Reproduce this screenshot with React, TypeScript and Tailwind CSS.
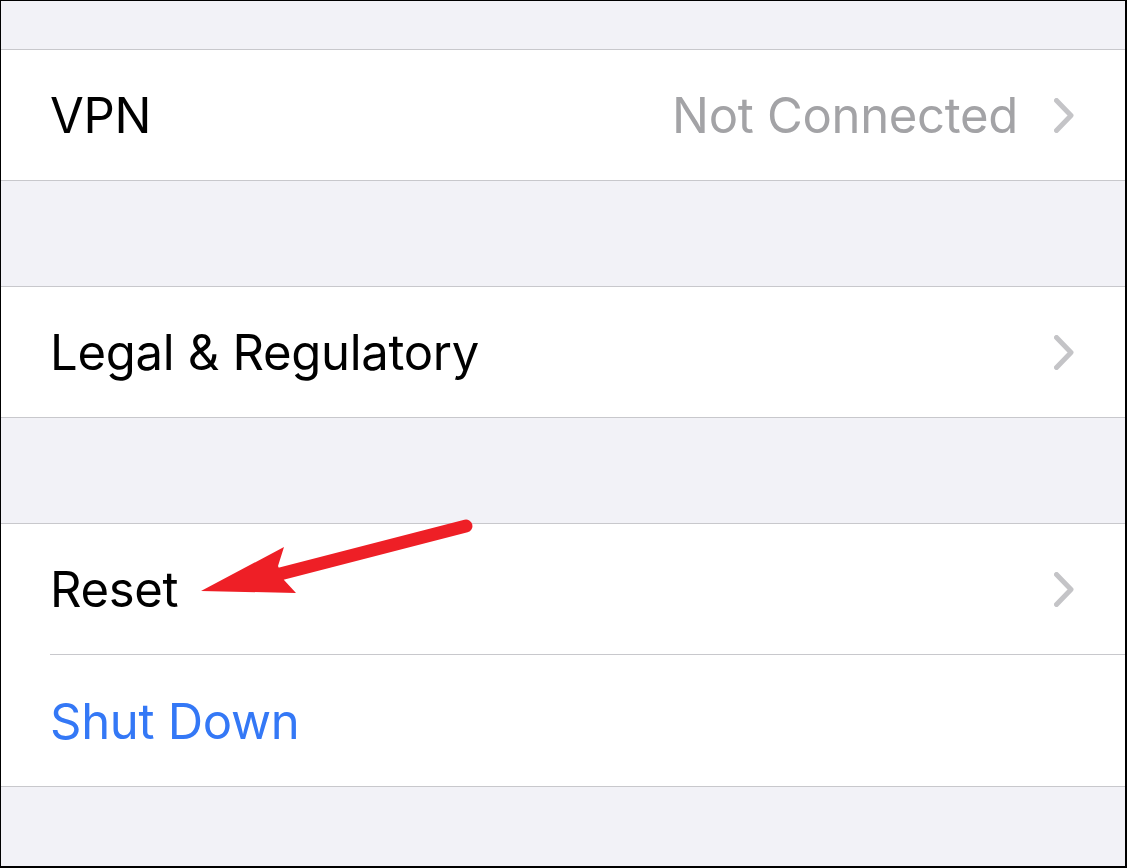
import React from "react";

function Chevron() {
  return (
    <svg width="20" height="35" viewBox="0 0 20 35" fill="none" className="shrink-0">
      <path
        d="M2.5 2.5 L17 17.5 L2.5 32.5"
        stroke="#c4c4c7"
        strokeWidth="5"
        strokeLinecap="round"
        strokeLinejoin="round"
      />
    </svg>
  );
}

function Row({
  label,
  value,
  chevron = true,
  blue = false,
}: {
  label: string;
  value?: string;
  chevron?: boolean;
  blue?: boolean;
}) {
  return (
    <div className="h-[130px] flex items-center pl-[49px] pr-[51px]">
      <span
        className={
          "flex-1 text-[49px] leading-none tracking-[-0.3px] " +
          (blue ? "text-[#3478f6]" : "text-black")
        }
      >
        {label}
      </span>
      {value && (
        <span className="text-[49px] leading-none tracking-[-0.3px] text-[#a3a3a6] mr-[36px]">
          {value}
        </span>
      )}
      {chevron && <Chevron />}
    </div>
  );
}

function Gap({ h }: { h: string }) {
  return <div className={h + " bg-[#f2f2f7]"} />;
}

function Line() {
  return <div className="h-px bg-[#c8c8cc]" />;
}

export default function App() {
  return (
    <div
      className="relative w-[1127px] h-[868px] overflow-hidden"
      style={{ fontFamily: "Inter, 'Noto Sans', sans-serif" }}
    >
      <div className="w-full h-full border-l border-t border-r-2 border-b-2 border-black bg-[#f2f2f7] flex flex-col">
        <Gap h="h-[48px]" />
        <Line />
        <div className="bg-white">
          <Row label="VPN" value="Not Connected" />
        </div>
        <Line />
        <Gap h="h-[105px]" />
        <Line />
        <div className="bg-white">
          <Row label="Legal & Regulatory" />
        </div>
        <Line />
        <Gap h="h-[105px]" />
        <Line />
        <div className="bg-white">
          <Row label="Reset" />
          <div className="ml-[49px] h-px bg-[#c8c8cc]" />
          <div className="h-px" />
          <Row label="Shut Down" chevron={false} blue />
        </div>
        <Line />
        <div className="flex-1 bg-[#f2f2f7]" />
      </div>

      <svg
        className="absolute inset-0 pointer-events-none"
        width="1127"
        height="868"
        viewBox="0 0 1127 868"
      >
        <line
          x1="466"
          y1="526"
          x2="280"
          y2="574"
          stroke="#ee1f26"
          strokeWidth="13"
          strokeLinecap="round"
        />
        <polygon points="201,591 284,547 278,566 284,580 296,593" fill="#ee1f26" />
      </svg>
    </div>
  );
}
